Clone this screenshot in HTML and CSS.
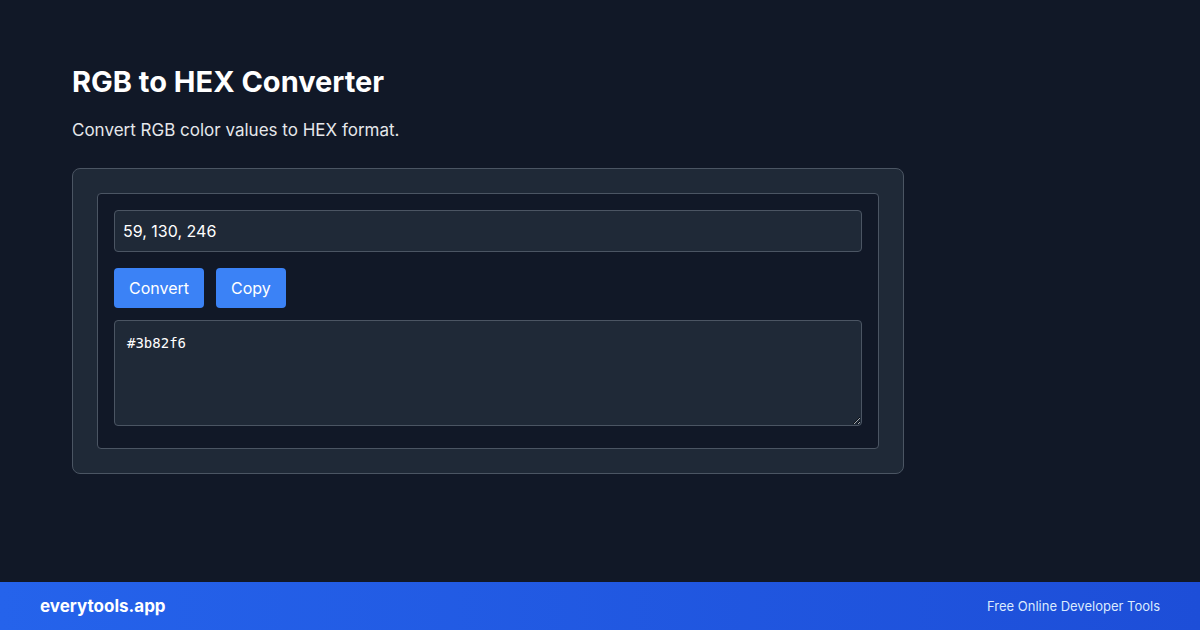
FILE: index.html
```html
<!DOCTYPE html>
<html lang="en">
<head>
<meta charset="utf-8">
<title>RGB to HEX Converter</title>
<link rel="stylesheet" href="styles.css">
</head>
<body>
<main class="main">
  <h1 class="title">RGB to HEX Converter</h1>
  <p class="subtitle">Convert RGB color values to HEX format.</p>
  <section class="card">
    <div class="tool">
      <input class="field" type="text" value="59, 130, 246">
      <div class="actions">
        <button class="btn">Convert</button>
        <button class="btn">Copy</button>
      </div>
      <textarea class="output">#3b82f6</textarea>
    </div>
  </section>
</main>
<footer class="footer">
  <span class="brand">everytools.app</span>
  <span class="tagline">Free Online Developer Tools</span>
</footer>
</body>
</html>
```
FILE: styles.css
```css
* { box-sizing: border-box; }
html, body { margin: 0; padding: 0; }
body {
  width: 1200px;
  height: 630px;
  background: #111827;
  color: #ffffff;
  font-family: Inter, "Noto Sans", sans-serif;
  display: flex;
  flex-direction: column;
  overflow: hidden;
}
.main {
  flex: 1;
  padding: 64px 72px 0;
}
.title {
  margin: 0 0 18px;
  font-size: 29px;
  line-height: 36px;
  font-weight: 700;
}
.subtitle {
  margin: 0 0 26px;
  font-size: 17px;
  line-height: 24px;
  color: #e5e7eb;
}
.card {
  width: 832px;
  background: #1f2937;
  border: 1px solid #4b5563;
  border-radius: 8px;
  padding: 24px;
}
.tool {
  background: #111827;
  border: 1px solid #4b5563;
  border-radius: 4px;
  padding: 16px 16px 16px;
}
.field {
  display: block;
  width: 100%;
  height: 42px;
  background: #1f2937;
  border: 1px solid #4b5563;
  border-radius: 4px;
  padding: 0 8px;
  color: #ffffff;
  font-family: Inter, "Noto Sans", sans-serif;
  font-size: 16px;
  outline: none;
}
.actions {
  display: flex;
  gap: 12px;
  margin: 16px 0 12px;
}
.btn {
  height: 40px;
  padding: 0 15px;
  background: #3b82f6;
  color: #ffffff;
  border: none;
  border-radius: 4px;
  font-family: Inter, "Noto Sans", sans-serif;
  font-size: 16px;
}
.output {
  display: block;
  width: 100%;
  height: 106px;
  margin-bottom: 6px;
  background: #1f2937;
  border: 1px solid #4b5563;
  border-radius: 4px;
  padding: 12px;
  color: #ffffff;
  font-family: "DejaVu Sans Mono", monospace;
  font-size: 14px;
  line-height: 20px;
  resize: vertical;
  outline: none;
}
.footer {
  height: 48px;
  flex-shrink: 0;
  display: flex;
  align-items: center;
  justify-content: space-between;
  padding: 0 40px;
  background: linear-gradient(90deg, #2563eb, #1d4ed8);
}
.brand {
  font-size: 17px;
  font-weight: 700;
  color: #ffffff;
}
.tagline {
  font-size: 13px;
  color: #dbeafe;
}
```
